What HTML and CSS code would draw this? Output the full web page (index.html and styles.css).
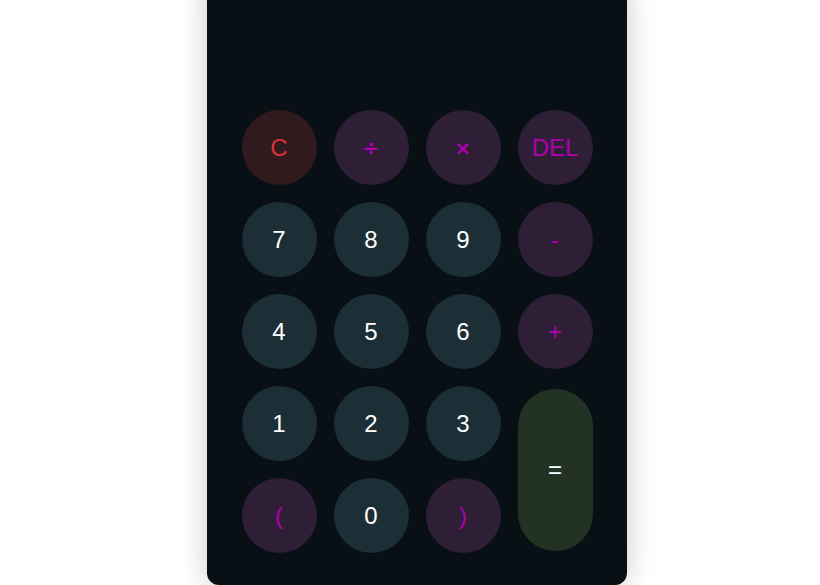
FILE: index.html
```html
<!DOCTYPE html>
<html>
<head>
<meta charset="utf-8">
<link rel="stylesheet" href="styles.css">
</head>
<body>
<div class="calc">
  <div class="display"></div>
  <div class="keys">
    <button class="key clear">C</button>
    <button class="key op sym">÷</button>
    <button class="key op sym">×</button>
    <button class="key op">DEL</button>
    <button class="key num">7</button>
    <button class="key num">8</button>
    <button class="key num">9</button>
    <button class="key op">-</button>
    <button class="key num">4</button>
    <button class="key num">5</button>
    <button class="key num">6</button>
    <button class="key op">+</button>
    <button class="key num">1</button>
    <button class="key num">2</button>
    <button class="key num">3</button>
    <button class="key equals">=</button>
    <button class="key op">(</button>
    <button class="key num">0</button>
    <button class="key op">)</button>
  </div>
</div>
</body>
</html>
```
FILE: styles.css
```css
html, body {
  margin: 0;
  padding: 0;
  background: #ffffff;
  height: 585px;
  overflow: hidden;
}
body {
  display: flex;
  justify-content: flex-start;
  padding-left: 207px;
  font-family: "Liberation Sans", Arial, sans-serif;
}
.calc {
  width: 420px;
  height: 605px;
  margin-top: -20px;
  background: #081016;
  border-radius: 12px;
  box-shadow: 0 0 28px rgba(0, 0, 0, 0.22);
  display: flex;
  flex-direction: column;
  box-sizing: border-box;
}
.display {
  height: 130px;
  flex: none;
}
.keys {
  display: grid;
  grid-template-columns: repeat(4, 75px);
  grid-auto-rows: 75px;
  gap: 17px;
  justify-content: center;
}
.key {
  width: 75px;
  height: 75px;
  border: none;
  border-radius: 50%;
  padding: 0;
  margin: 0;
  font-family: "Liberation Sans", Arial, sans-serif;
  font-size: 24px;
  display: flex;
  align-items: center;
  justify-content: center;
  cursor: pointer;
}
.sym {
  font-family: "DejaVu Sans", sans-serif;
  font-weight: bold;
  font-size: 20px;
}
.num {
  background: #1c2e36;
  color: #ffffff;
}
.op {
  background: #2e1f37;
  color: #b000b0;
}
.clear {
  background: #301a1e;
  color: #d9323a;
}
.equals {
  grid-column: 4;
  grid-row: 4 / span 2;
  height: 162px;
  align-self: center;
  border-radius: 38px;
  background: #233323;
  color: #ffffff;
}
```
